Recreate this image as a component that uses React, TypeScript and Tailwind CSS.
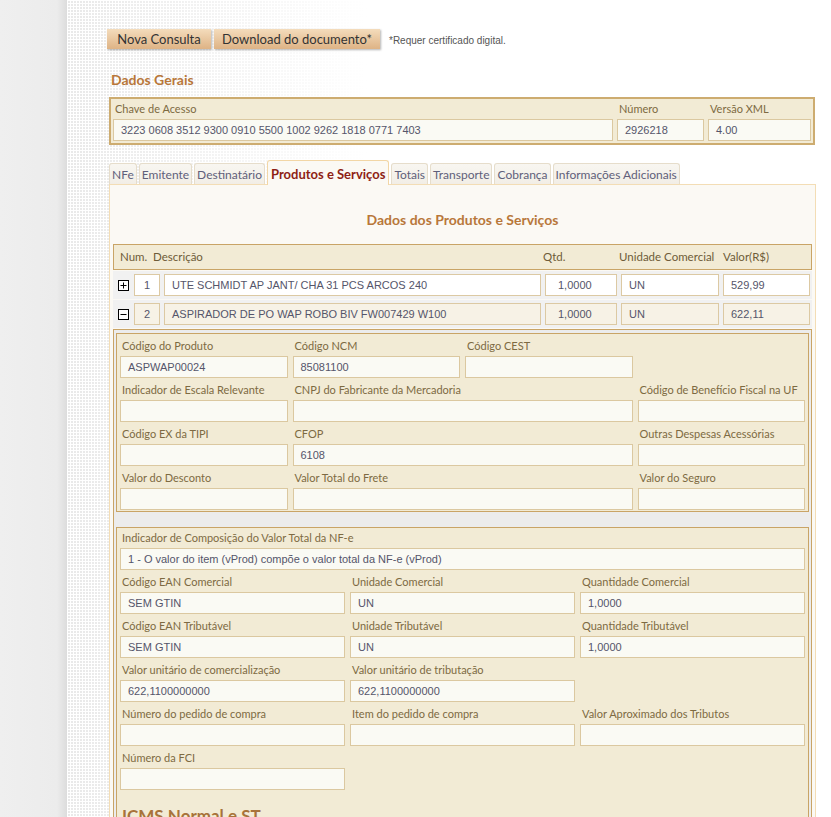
import React from 'react';

const tabs = ['NFe', 'Emitente', 'Destinatário', 'Produtos e Serviços', 'Totais', 'Transporte', 'Cobrança', 'Informações Adicionais'];

const Field: React.FC<{ label?: string; value?: string; className?: string }> = ({ label = '', value = '', className = '' }) => (
    <div className={className}>
        <div className="h-[20px] pl-[2px] text-[11px] leading-[20px] text-[#7d6a42] whitespace-nowrap">{label}</div>
        <div className="h-[22px] border border-[#dbc8a0] bg-[#fafaf4] px-[7px] font-['Liberation_Sans',Arial,sans-serif] text-[11px] leading-[20px] text-[#55556a] whitespace-nowrap overflow-hidden">
            {value}
        </div>
    </div>
);

const ToggleIcon: React.FC<{ open?: boolean }> = ({ open }) => (
    <svg width="11" height="11" viewBox="0 0 11 11" className="block">
        <rect x="0.5" y="0.5" width="10" height="10" fill="white" stroke="black" strokeWidth="1" />
        <line x1="2.5" y1="5.5" x2="8.5" y2="5.5" stroke="black" strokeWidth="1" />
        {!open && <line x1="5.5" y1="2.5" x2="5.5" y2="8.5" stroke="black" strokeWidth="1" />}
    </svg>
);

const cell = "h-[22px] border border-[#dcc9a3] font-['Liberation_Sans',Arial,sans-serif] text-[11px] leading-[20px] text-[#55556a] whitespace-nowrap overflow-hidden";

export default function App() {
    return (
        <div className="flex min-h-[817px] font-['Lato',sans-serif]">
            {/* gray gutter */}
            <div className="w-[67px] shrink-0 bg-[linear-gradient(to_right,#efefef_0,#ececec_85%,#dcdcdc_100%)]" />

            <div className="flex-1 pt-[29px] pl-[40px] pr-[15px] pb-10 [background:linear-gradient(to_right,rgba(255,255,255,0)_0,#fff_300px),linear-gradient(#fff_1px,transparent_1px)_0_0/3px_3px,linear-gradient(90deg,#fff_1px,#e9e9e9_1px)_0_0/3px_3px]">
                {/* buttons */}
                <div className="flex items-center">
                    <button className="h-[20px] w-[104px] bg-[linear-gradient(#f4dcbc,#deb385)] text-[13px] leading-[20px] text-[#333] shadow-[1px_1px_2px_rgba(0,0,0,0.3)]">
                        Nova Consulta
                    </button>
                    <button className="ml-[3px] h-[20px] w-[166px] bg-[linear-gradient(#f4dcbc,#deb385)] text-[13px] leading-[20px] text-[#333] shadow-[1px_1px_2px_rgba(0,0,0,0.3)]">
                        Download do documento*
                    </button>
                    <span className="ml-[9px] pt-[3px] font-['Liberation_Sans',Arial,sans-serif] text-[10px] text-[#555]">*Requer certificado digital.</span>
                </div>

                {/* Dados Gerais */}
                <h2 className="mt-[22px] pl-[4px] text-[14px] font-bold leading-[18px] text-[#b8773a]">Dados Gerais</h2>
                <div className="ml-[2px] mr-[1px] mt-[8px] border-2 border-[#cdac70] bg-[#f2ebd5] px-[2px] pb-[2px]">
                    <div className="flex gap-[4px]">
                        <Field className="w-[500px]" label="Chave de Acesso" value="3223 0608 3512 9300 0910 5500 1002 9262 1818 0771 7403" />
                        <Field className="w-[87px]" label="Número" value="2926218" />
                        <Field className="flex-1" label="Versão XML" value="4.00" />
                    </div>
                </div>

                {/* tabs */}
                <div className="ml-[2px] mt-[15px] flex items-end gap-[2px]">
                    {tabs.map((t) =>
                        t === 'Produtos e Serviços' ? (
                            <div key={t} className="relative z-10 -mb-px h-[25px] rounded-t-[3px] border border-b-0 border-[#f2d6a6] bg-[#fbf9f4] px-[3px] text-[13px] font-bold leading-[26px] text-[#8e1f14]">
                                {t}
                            </div>
                        ) : (
                            <div key={t} className="h-[21px] rounded-t-[3px] border border-b-0 border-[#e6ddcb] bg-[linear-gradient(#f8f6f1,#f2eee6)] px-[2px] text-[12px] leading-[21px] text-[#5f5f7a]">
                                {t}
                            </div>
                        )
                    )}
                </div>

                {/* panel */}
                <div className="ml-[2px] border border-[#f3ddb5] bg-[#fbf9f4] px-[3px]">
                    <h3 className="pt-[26px] pb-[15px] text-center text-[14px] font-bold leading-[18px] text-[#b8773a]">Dados dos Produtos e Serviços</h3>

                    {/* table header */}
                    <div className="flex h-[26px] items-center border border-[#c9a466] bg-[#f2ebd5] pl-[6px] text-[11.5px] text-[#6e5c38]">
                        <div className="w-[33px]">Num.</div>
                        <div className="w-[390px]">Descrição</div>
                        <div className="w-[76px]">Qtd.</div>
                        <div className="w-[104px]">Unidade Comercial</div>
                        <div className="flex-1">Valor(R$)</div>
                    </div>

                    {/* rows */}
                    <div className="mt-px flex h-[28px] items-center bg-[#f1f1f1]">
                        <div className="w-[21px] pl-[5px]"><ToggleIcon /></div>
                        <div className="flex gap-[4px]">
                            <div className={cell + " w-[26px] bg-white text-center text-[#6a5a8a]"}>1</div>
                            <div className={cell + " w-[377px] bg-white px-[7px]"}>UTE SCHMIDT AP JANT/ CHA 31 PCS ARCOS 240</div>
                            <div className={cell + " w-[72px] bg-white px-[12px]"}>1,0000</div>
                            <div className={cell + " w-[98px] bg-white px-[7px]"}>UN</div>
                            <div className={cell + " w-[87px] bg-white px-[7px]"}>529,99</div>
                        </div>
                    </div>
                    <div className="mt-px flex h-[28px] items-center bg-[#f1f1f1]">
                        <div className="w-[21px] pl-[5px]"><ToggleIcon open /></div>
                        <div className="flex gap-[4px]">
                            <div className={cell + " w-[26px] bg-[#f7f2e6] text-center"}>2</div>
                            <div className={cell + " w-[377px] bg-[#f7f2e6] px-[7px]"}>ASPIRADOR DE PO WAP ROBO BIV FW007429 W100</div>
                            <div className={cell + " w-[72px] bg-[#f7f2e6] px-[12px]"}>1,0000</div>
                            <div className={cell + " w-[98px] bg-[#f7f2e6] px-[7px]"}>UN</div>
                            <div className={cell + " w-[87px] bg-[#f7f2e6] px-[7px]"}>622,11</div>
                        </div>
                    </div>

                    {/* expanded item */}
                    <div className="mt-px border border-[#c9a466] bg-[#ececec] px-[2px] pt-[3px] pb-6">
                        <div className="grid grid-cols-4 gap-x-[5px] gap-y-[2px] border border-[#c9a466] bg-[#f2ebd5] px-[3px] pt-[2px] pb-px">
                            <Field label="Código do Produto" value="ASPWAP00024" />
                            <Field label="Código NCM" value="85081100" />
                            <Field label="Código CEST" />
                            <div />
                            <Field label="Indicador de Escala Relevante" />
                            <Field className="col-span-2" label="CNPJ do Fabricante da Mercadoria" />
                            <Field label="Código de Benefício Fiscal na UF" />
                            <Field label="Código EX da TIPI" />
                            <Field className="col-span-2" label="CFOP" value="6108" />
                            <Field label="Outras Despesas Acessórias" />
                            <Field label="Valor do Desconto" />
                            <Field className="col-span-2" label="Valor Total do Frete" />
                            <Field label="Valor do Seguro" />
                        </div>

                        <div className="mt-[15px] border border-[#c9a466] bg-[#f2ebd5] px-[3px] pb-4">
                            <Field label="Indicador de Composição do Valor Total da NF-e" value="1 - O valor do item (vProd) compõe o valor total da NF-e (vProd)" />
                            <div className="mt-[2px] grid grid-cols-3 gap-x-[5px] gap-y-[2px]">
                                <Field label="Código EAN Comercial" value="SEM GTIN" />
                                <Field label="Unidade Comercial" value="UN" />
                                <Field label="Quantidade Comercial" value="1,0000" />
                                <Field label="Código EAN Tributável" value="SEM GTIN" />
                                <Field label="Unidade Tributável" value="UN" />
                                <Field label="Quantidade Tributável" value="1,0000" />
                                <Field label="Valor unitário de comercialização" value="622,1100000000" />
                                <Field label="Valor unitário de tributação" value="622,1100000000" />
                                <div />
                                <Field label="Número do pedido de compra" />
                                <Field label="Item do pedido de compra" />
                                <Field label="Valor Aproximado dos Tributos" />
                                <Field label="Número da FCI" />
                            </div>

                            <h4 className="mt-[15px] pl-[2px] text-[17px] font-bold leading-[22px] text-[#a8733a]">ICMS Normal e ST</h4>
                            <div className="mt-[4px] grid grid-cols-3 gap-x-[5px] gap-y-[2px]">
                                <Field label="Origem da Mercadoria" value="0 - Nacional" />
                                <Field label="Tributação do ICMS" value="00 - Tributada integralmente" />
                                <Field label="Modalidade Definição da BC do ICMS" value="3 - Valor da Operação" />
                            </div>
                        </div>
                    </div>
                </div>
            </div>
        </div>
    );
}
